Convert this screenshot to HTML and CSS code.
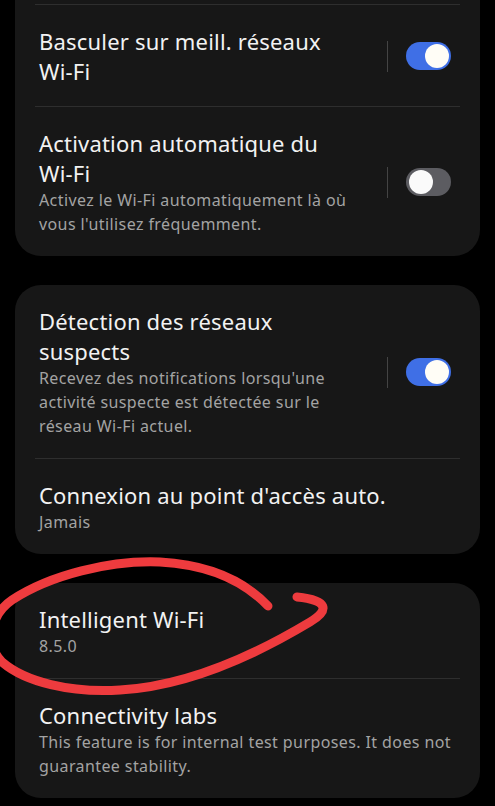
FILE: index.html
```html
<!DOCTYPE html>
<html lang="fr">
<head>
    <meta charset="UTF-8">
    <meta name="viewport" content="width=device-width, initial-scale=1.0">
    <title>Paramètres Wi-Fi avancés</title>
    <link rel="stylesheet" href="styles.css">
</head>
<body>
    <div class="settings">
        <div class="card cut">
            <div class="row">
                <div class="text">
                    <p class="title">Basculer sur meill. réseaux <span class="nw">Wi-Fi</span></p>
                </div>
                <span class="sep"></span>
                <span class="switch on"></span>
            </div>
            <div class="row">
                <div class="text">
                    <p class="title">Activation automatique du <span class="nw">Wi-Fi</span></p>
                    <p class="sub">Activez le <span class="nw">Wi-Fi</span> automatiquement là où vous l'utilisez fréquemment.</p>
                </div>
                <span class="sep"></span>
                <span class="switch"></span>
            </div>
        </div>

        <div class="card">
            <div class="row">
                <div class="text">
                    <p class="title">Détection des réseaux suspects</p>
                    <p class="sub">Recevez des notifications lorsqu'une activité suspecte est détectée sur le réseau <span class="nw">Wi-Fi</span> actuel.</p>
                </div>
                <span class="sep"></span>
                <span class="switch on"></span>
            </div>
            <div class="row">
                <div class="text wide">
                    <p class="title">Connexion au point d'accès auto.</p>
                    <p class="sub">Jamais</p>
                </div>
            </div>
        </div>

        <div class="card">
            <div class="row">
                <div class="text wide">
                    <p class="title">Intelligent <span class="nw">Wi-Fi</span></p>
                    <p class="sub">8.5.0</p>
                </div>
            </div>
            <div class="row">
                <div class="text wide">
                    <p class="title">Connectivity labs</p>
                    <p class="sub">This feature is for internal test purposes. It does not guarantee stability.</p>
                </div>
            </div>
        </div>
    </div>

    <!-- annotation au feutre rouge -->
    <svg class="scribble" width="495" height="806" viewBox="0 0 495 806">
        <path d="M268,606 C248,585 215,565 160,562 C110,560 50,575 12,600 C-10,615 -15,645 2,662 C25,682 70,693 120,690 C190,686 260,652 310,622 C330,610 328,600 297,597"
              fill="none" stroke="#ee3b3e" stroke-width="9" stroke-linecap="round" stroke-linejoin="round"/>
    </svg>
</body>
</html>
```

FILE: styles.css
```css
body {
    margin: 0;
    padding: 0;
    background: #000;
    font-family: 'Noto Sans', 'Open Sans', sans-serif;
    color: #f2f2f2;
    width: 495px;
    height: 806px;
    overflow: hidden;
    position: relative;
}

.settings {
    display: flex;
    flex-direction: column;
    gap: 29px;
    padding: 0 15px;
}

.card {
    background: #171717;
    border-radius: 26px;
    padding: 0 20px;
}

.card.cut {
    border-top-left-radius: 0;
    border-top-right-radius: 0;
    padding-top: 4px;
}

.row {
    display: flex;
    align-items: center;
    padding: 21px 2px 20px 4px;
    border-top: 1px solid #2e2e2e;
}

.card:not(.cut) .row:first-child {
    border-top: none;
}

.text {
    flex: 1;
    max-width: 325px;
    margin-right: 24px;
}

.text.wide {
    max-width: none;
    margin-right: 0;
}

.nw {
    white-space: nowrap;
}

.title {
    margin: 0;
    font-size: 22px;
    letter-spacing: 0.2px;
    line-height: 30px;
    color: #f2f2f2;
}

.sub {
    margin: 0;
    font-size: 16px;
    letter-spacing: 0.4px;
    line-height: 24px;
    color: #a3a3a3;
}

.sep {
    width: 1px;
    height: 31px;
    background: #444;
    margin-right: 18px;
    flex-shrink: 0;
}

.switch {
    width: 45px;
    height: 28px;
    margin-right: 7px;
    border-radius: 14px;
    background: #5c5c61;
    position: relative;
    flex-shrink: 0;
}

.switch::after {
    content: "";
    position: absolute;
    top: 2px;
    left: 3px;
    width: 24px;
    height: 24px;
    border-radius: 50%;
    background: #fafafa;
}

.switch.on {
    background: #3f6fe6;
}

.switch.on::after {
    left: auto;
    right: 2px;
    background: #fffdf6;
}

.scribble {
    position: absolute;
    top: 0;
    left: 0;
    pointer-events: none;
}
```
